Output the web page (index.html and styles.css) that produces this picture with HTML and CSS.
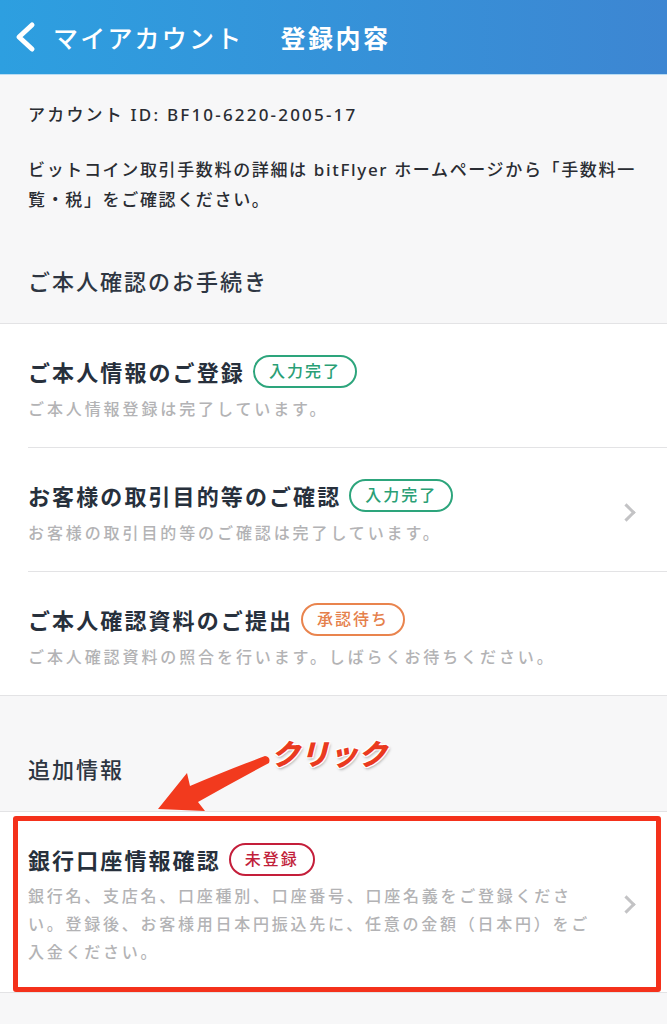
FILE: index.html
```html
<html>
<head>
    <meta charset="utf-8">
    <title>登録内容</title>
    <link rel="stylesheet" href="styles.css">
</head>
<body>
    <header class="nav">
        <a class="nav-back">
            <svg class="nav-back-icon" width="24" height="32" viewBox="0 0 24 32">
                <polyline points="19,4 6,16 19,28" fill="none" stroke="#fff" stroke-width="5" stroke-linecap="round" stroke-linejoin="round"/>
            </svg>
            <span>マイアカウント</span>
        </a>
        <h1 class="nav-title">登録内容</h1>
    </header>

    <section class="intro">
        <p class="account-id">アカウント ID: BF10-6220-2005-17</p>
        <p class="note">ビットコイン取引手数料の詳細は bitFlyer ホームページから「手数料一<br>覧・税」をご確認ください。</p>
        <h2 class="group-title">ご本人確認のお手続き</h2>
    </section>

    <ul class="steps">
        <li class="step">
            <div class="step-inner">
                <div class="step-text">
                    <div class="step-head">
                        <span class="step-title">ご本人情報のご登録</span>
                        <span class="badge badge-done">入力完了</span>
                    </div>
                    <p class="step-desc">ご本人情報登録は完了しています。</p>
                </div>
            </div>
        </li>
        <li class="step">
            <div class="step-inner">
                <div class="step-text">
                    <div class="step-head">
                        <span class="step-title">お客様の取引目的等のご確認</span>
                        <span class="badge badge-done">入力完了</span>
                    </div>
                    <p class="step-desc">お客様の取引目的等のご確認は完了しています。</p>
                </div>
                <span class="chevron"></span>
            </div>
        </li>
        <li class="step">
            <div class="step-inner">
                <div class="step-text">
                    <div class="step-head">
                        <span class="step-title">ご本人確認資料のご提出</span>
                        <span class="badge badge-wait">承認待ち</span>
                    </div>
                    <p class="step-desc">ご本人確認資料の照合を行います。しばらくお待ちください。</p>
                </div>
            </div>
        </li>
    </ul>

    <section class="extra">
        <h2 class="group-title">追加情報</h2>
        <!-- annotation over the screenshot -->
        <svg class="callout-arrow" width="260" height="110" viewBox="0 0 260 110">
            <path d="M18,90 L47,54 L50,67 Q90,50 125,37 Q131,38 129,44 Q95,62 58,83 L65,92 Z" fill="#f23a1e"/>
        </svg>
        <span class="callout-text">クリック</span>
    </section>

    <ul class="steps">
        <li class="step step-marked">
            <div class="step-inner">
                <div class="step-text">
                    <div class="step-head">
                        <span class="step-title">銀行口座情報確認</span>
                        <span class="badge badge-none">未登録</span>
                    </div>
                    <p class="step-desc step-desc-long">銀行名、支店名、口座種別、口座番号、口座名義をご登録くださ<br>い。登録後、お客様用日本円振込先に、任意の金額（日本円）をご<br>入金ください。</p>
                </div>
                <span class="chevron"></span>
            </div>
            <span class="callout-box"></span>
        </li>
    </ul>
</body>
</html>
```

FILE: styles.css
```css
* {
    box-sizing: border-box;
    margin: 0;
    padding: 0;
}
body {
    margin: 0;
    background: #f7f7f8;
    font-family: "Noto Sans", "Noto Sans CJK JP", sans-serif;
    color: #2b3340;
}

/* top bar */
.nav {
    height: 75px;
    display: flex;
    align-items: center;
    padding-left: 13px;
    background: linear-gradient(90deg, #2d9fe0, #3d86d2);
    border-bottom: 1px solid #b9dcf3;
    color: #fff;
}
.nav-back {
    display: flex;
    align-items: center;
    gap: 16px;
    font-size: 25px;
    font-weight: 500;
    letter-spacing: 2.2px;
}
.nav-title {
    margin-left: 37px;
    font-size: 25px;
    font-weight: 700;
    letter-spacing: 2.5px;
}

/* intro block */
.intro {
    padding: 27px 28px 26px;
    border-bottom: 1px solid #e3e3e5;
}
.account-id {
    font-size: 17px;
    line-height: 26px;
    font-weight: 500;
    letter-spacing: 2.2px;
    color: #2a2d33;
}
.note {
    margin-top: 27px;
    font-size: 17px;
    line-height: 30px;
    font-weight: 500;
    letter-spacing: 1.65px;
    color: #2a2d33;
}
.group-title {
    margin-top: 50px;
    font-size: 22px;
    line-height: 32px;
    font-weight: 500;
    letter-spacing: 2px;
    color: #2e3642;
}

/* list rows */
.steps {
    list-style: none;
    background: #fff;
    border-top: 1px solid #e3e3e5;
    border-bottom: 1px solid #e3e3e5;
}
.intro + .steps {
    border-top: none;
}
.step {
    padding-left: 28px;
}
.step-inner {
    display: flex;
    align-items: center;
    padding: 31px 0 25px;
    border-bottom: 1px solid #e3e3e5;
}
.step:last-child .step-inner {
    border-bottom: none;
}
.step-text {
    flex: 1;
}
.step-head {
    display: flex;
    align-items: center;
    gap: 8px;
    height: 32px;
}
.step-title {
    font-size: 22px;
    font-weight: 700;
    letter-spacing: 2.1px;
    color: #27303c;
}
.step-desc {
    margin-top: 9px;
    font-size: 16px;
    line-height: 26px;
    font-weight: 500;
    letter-spacing: 2.9px;
    color: #b3b3b5;
}
.step-desc-long {
    margin-top: 7px;
    line-height: 28px;
    letter-spacing: 2.75px;
    white-space: nowrap;
}
.step-marked .step-inner {
    padding-bottom: 26px;
}

.badge {
    display: inline-block;
    height: 33px;
    line-height: 28px;
    padding: 0 14px;
    border: 2.5px solid;
    border-radius: 17px;
    font-size: 16px;
    font-weight: 500;
    letter-spacing: 2px;
}
.badge-done {
    color: #2a9f76;
    border-color: #2da57c;
}
.badge-wait {
    color: #e5804b;
    border-color: #e9844e;
}
.badge-none {
    color: #c11f3b;
    border-color: #c41e3a;
}

.chevron {
    width: 13px;
    height: 13px;
    margin: 0 34px 0 12px;
    border-top: 3.5px solid #c3c3c5;
    border-right: 3.5px solid #c3c3c5;
    transform: rotate(45deg);
}

/* additional info header */
.extra {
    position: relative;
    padding: 57px 28px 26px;
}
.extra .group-title {
    margin-top: 0;
}

/* red annotation */
.callout-arrow {
    position: absolute;
    left: 140px;
    top: 23px;
    overflow: visible;
    z-index: 2;
}
.callout-text {
    position: absolute;
    left: 271px;
    top: 43px;
    font-size: 29px;
    line-height: 29px;
    font-weight: 900;
    font-style: italic;
    color: #ea3a1f;
    text-shadow: -1px -1px 0 #fff, 1px -1px 0 #fff, -1px 1px 0 #fff, 1px 1px 0 #fff, 1px 2px 3px rgba(0, 0, 0, 0.35);
}
.step-marked {
    position: relative;
}
.callout-box {
    position: absolute;
    top: 4px;
    left: 13px;
    right: 6px;
    bottom: 0;
    border: 5px solid #f4311b;
    border-radius: 3px;
    pointer-events: none;
}
```
